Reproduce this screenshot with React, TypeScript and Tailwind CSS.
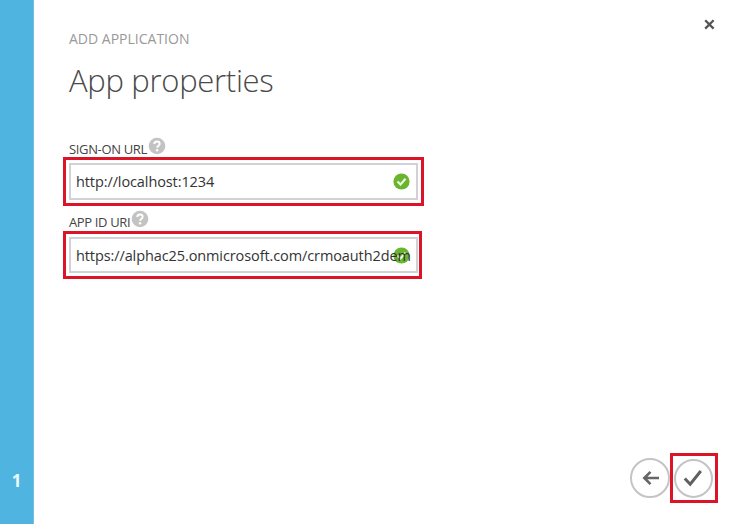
import React from "react";

function HelpIcon() {
  return (
    <svg width="18" height="18" viewBox="0 0 18 18" className="shrink-0">
      <circle cx="9" cy="9" r="8.3" fill="#c3c3c3" />
      <path d="M6.3 7.1c0-1.7 1.1-2.6 2.7-2.6 1.6 0 2.7.9 2.7 2.3 0 2-2.5 2-2.5 4" fill="none" stroke="#fff" strokeWidth="1.9" />
      <circle cx="9.1" cy="13.2" r="1.2" fill="#fff" />
    </svg>
  );
}

function ValidIcon() {
  return (
    <svg width="17" height="17" viewBox="0 0 17 17" className="absolute right-[6px] top-[8px]">
      <circle cx="8.5" cy="8.5" r="8.1" fill="#69b52f" />
      <path d="M4.5 8.5l3 3 5-5.7" fill="none" stroke="#effbe2" strokeWidth="2.1" />
    </svg>
  );
}

function Field({ value, frame }: { value: string; frame: string }) {
  return (
    <div className={`-ml-[6px] border-[3px] border-[#dc1428] pt-[3px] pb-[3px] pl-[3px] ${frame}`}>
      <div className="relative flex h-full w-[349px] items-center border-2 border-[#d2d1d5] pl-[5px]">
        <ValidIcon />
        <span className="relative pt-px text-[14.5px] tracking-[-0.1px] whitespace-nowrap text-[#333]">{value}</span>
      </div>
    </div>
  );
}

export default function App() {
  return (
    <div className="flex h-[524px] w-[732px] overflow-hidden bg-white font-['Open_Sans','Noto_Sans',sans-serif]">
      <aside className="flex w-[34px] shrink-0 flex-col justify-end border-r border-[#74bddd] bg-[#50b4e1] pb-[32px] text-center text-[17px] leading-[22px] font-bold text-[#e9fbff]">
        1
      </aside>
      <main className="flex grow flex-col pl-[35px]">
        <header className="flex h-[102px] justify-between">
          <div className="pt-[30px]">
            <p className="text-[14px] leading-[18px] text-[#999]">ADD APPLICATION</p>
            <h1 className="mt-[11px] text-[31px] leading-[42px] font-light tracking-[-0.3px] text-[#4a4a4a]">App properties</h1>
          </div>
          <svg width="11" height="11" viewBox="0 0 11 11" className="mt-[19px] mr-[17px]">
            <path d="M1.2 1.2l8.4 8.4M9.6 1.2l-8.4 8.4" stroke="#555" strokeWidth="2.3" />
          </svg>
        </header>
        <section className="pt-[35px]">
          <div className="flex h-[20px] gap-px">
            <span className="pt-[4px] text-[13px] leading-[16px] tracking-[-0.35px] text-[#444]">SIGN-ON URL</span>
            <HelpIcon />
          </div>
          <Field value="http://localhost:1234" frame="h-[49px] w-[361px]" />
          <div className="mt-[4px] flex h-[21px] gap-px">
            <span className="pt-[4px] text-[13px] leading-[16px] tracking-[-0.35px] text-[#444]">APP ID URI</span>
            <HelpIcon />
          </div>
          <Field value="https://alphac25.onmicrosoft.com/crmoauth2dem" frame="h-[48px] w-[359px]" />
        </section>
        <footer className="mt-auto mr-[14px] mb-[21px] flex items-center justify-end">
          <button className="flex size-[40px] items-center justify-center rounded-full border-[2.5px] border-[#c4c4c4]">
            <svg width="18" height="16" viewBox="0 0 18 16" className="ml-[2px]">
              <path d="M17 8H3M8.5 1.8L2.3 8l6.2 6.2" fill="none" stroke="#666" strokeWidth="2.6" />
            </svg>
          </button>
          <div className="flex h-[50px] w-[48px] items-center justify-center border-[3px] border-[#dc1428] pr-[2px]">
            <button className="flex size-[39px] shrink-0 items-center justify-center rounded-full border-[2.5px] border-[#c4c4c4]">
              <svg width="20" height="18" viewBox="0 0 20 18">
                <path d="M1.8 9.5l5.4 5.7L17.8 2" fill="none" stroke="#606060" strokeWidth="3" />
              </svg>
            </button>
          </div>
        </footer>
      </main>
    </div>
  );
}
